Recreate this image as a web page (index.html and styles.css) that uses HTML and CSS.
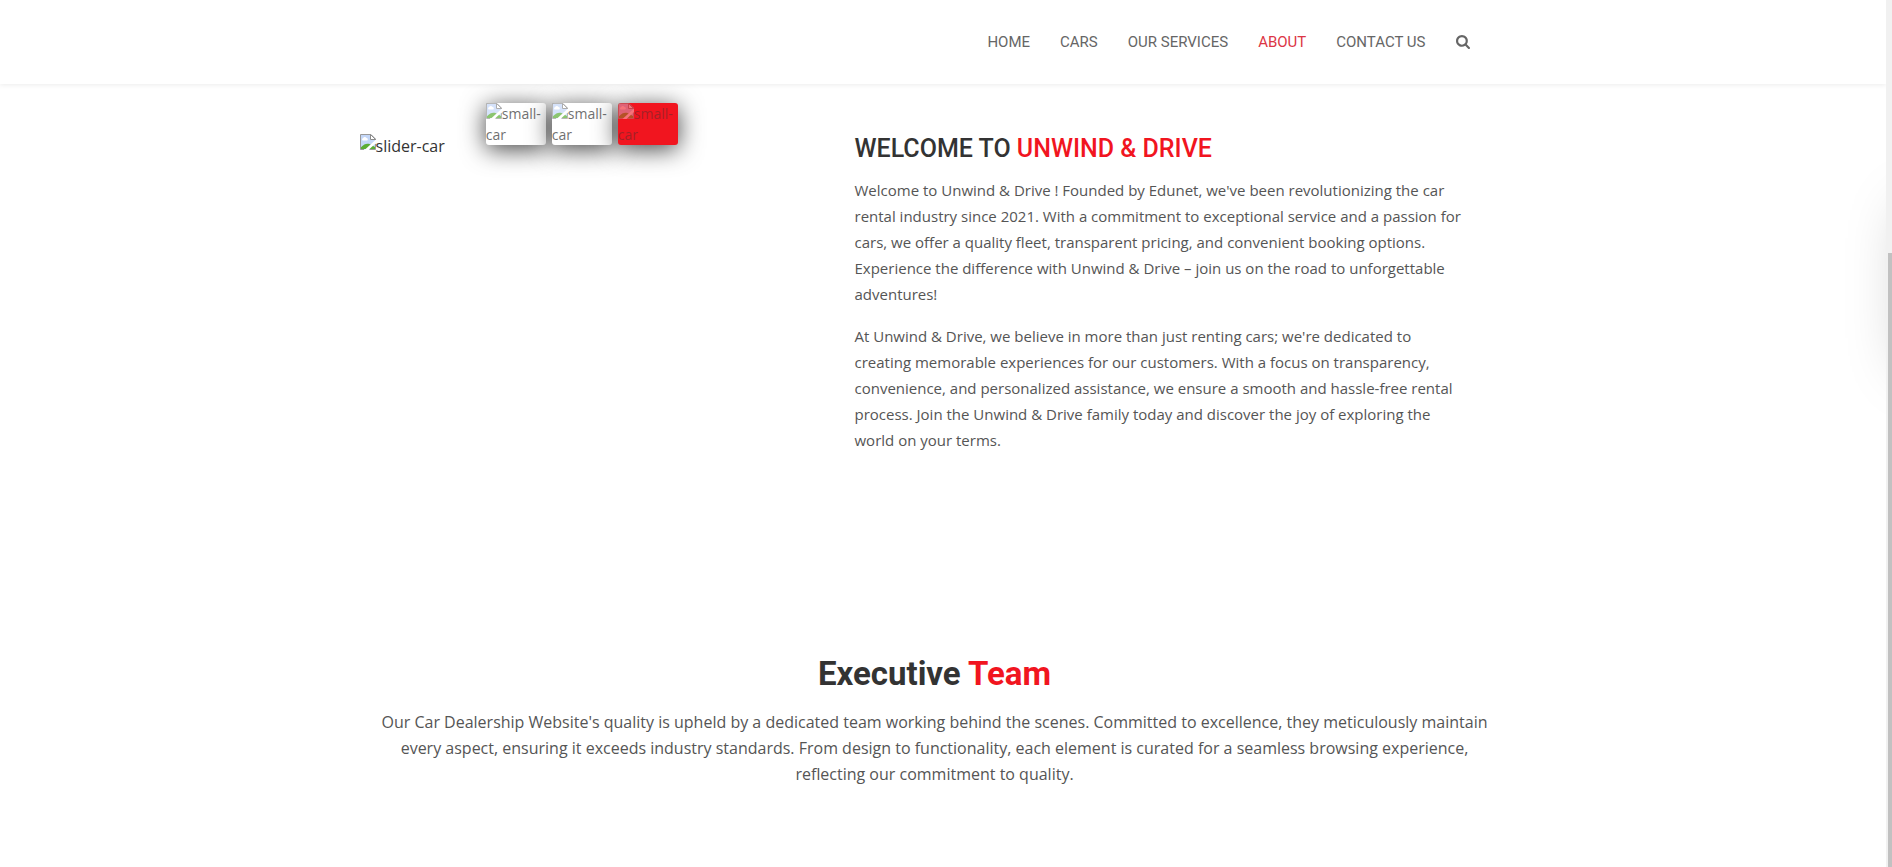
FILE: index.html
```
<!DOCTYPE html>
<html lang="en">
<head>
<meta charset="utf-8">
<meta name="viewport" content="width=device-width, initial-scale=1">
<title>Unwind &amp; Drive - About</title>
<link rel="stylesheet" href="styles.css">
</head>
<body>
<svg class="symbols" aria-hidden="true">
  <symbol id="missing-image" viewBox="0 0 16 16">
    <path d="M.5.5H11L15.500 5V15.500H.5Z" fill="#c4d7f8"/>
    <path d="M2.500 6.500a1.500 1.500 0 0 1 .6-2.500a2 2 0 0 1 3.400 0a1.400 1.400 0 0 1 .8 2.500Z" fill="#fff"/>
    <path d="M1 15V13.200C4 9.800 7 9.200 9.500 10L15 13v2Z" fill="#5bad35"/>
    <path d="M16 5.500V9L8.500 16H4.500Z" fill="#fff"/>
    <path d="M4 15.500H.5V.5H11L15.500 5V6M15.500 10v5.500H9.500" fill="none" stroke="#9a9a9a"/>
    <path d="M10.500.5V5.500H15.500Z" fill="#fff" stroke="#8b8b8b"/>
  </symbol>
</svg>
<div class="page">
  <header class="header">
    <nav class="nav wrap" aria-label="Main">
      <a href="#home">HOME</a>
      <a href="#cars">CARS</a>
      <a href="#services">OUR SERVICES</a>
      <a href="#about" class="active" aria-current="page">ABOUT</a>
      <a href="#contact">CONTACT US</a>
      <button class="search" type="button" aria-label="Search">
        <svg viewBox="0 0 1664 1664" aria-hidden="true"><path fill="currentColor" d="M1152 704q0-185-131.500-316.500T704 256 387.500 387.500 256 704t131.500 316.500T704 1152t316.500-131.500T1152 704zm512 832q0 52-38 90t-90 38q-54 0-90-38l-343-342q-179 124-399 124-143 0-273.500-55.500t-225-150-150-225T0 704t55.500-273.500 150-225 225-150T704 0t273.500 55.500 225 150 150 225T1408 704q0 220-124 399l343 343q37 37 37 90z"/></svg>
      </button>
    </nav>
  </header>
  <main>
    <section class="about wrap" id="about">
      <div class="slider">
        <div class="slide"><svg class="missing"><use href="#missing-image"/></svg>slider-car</div>
        <div class="thumbs">
          <button class="thumb" type="button"><span><svg class="missing"><use href="#missing-image"/></svg>small-car</span></button>
          <button class="thumb" type="button"><span><svg class="missing"><use href="#missing-image"/></svg>small-car</span></button>
          <button class="thumb selected" type="button"><span><svg class="missing"><use href="#missing-image"/></svg>small-car</span></button>
        </div>
      </div>
      <div class="intro">
        <h2>WELCOME TO <span class="accent">UNWIND &amp; DRIVE</span></h2>
        <p>Welcome to Unwind &amp; Drive ! Founded by Edunet, we've been revolutionizing the car rental industry since 2021. With a commitment to exceptional service and a passion for cars, we offer a quality fleet, transparent pricing, and convenient booking options. Experience the difference with Unwind &amp; Drive – join us on the road to unforgettable adventures!</p>
        <p>At Unwind &amp; Drive, we believe in more than just renting cars; we're dedicated to creating memorable experiences for our customers. With a focus on transparency, convenience, and personalized assistance, we ensure a smooth and hassle-free rental process. Join the Unwind &amp; Drive family today and discover the joy of exploring the world on your terms.</p>
      </div>
    </section>
    <section class="team wrap">
      <h2>Executive <span class="accent">Team</span></h2>
      <p>Our Car Dealership Website's quality is upheld by a dedicated team working behind the scenes. Committed to excellence, they meticulously maintain every aspect, ensuring it exceeds industry standards. From design to functionality, each element is curated for a seamless browsing experience, reflecting our commitment to quality.</p>
    </section>
  </main>
  <div class="drawer"></div>
</div>
<div class="scrollbar"><div class="scroll-thumb"></div></div>
</body>
</html>
```
FILE: styles.css
```
* { box-sizing: border-box; }
body {
  display: flex;
  min-height: 100vh;
  margin: 0;
  background: #fff;
  color: #333;
  font: 16px/24px "Open Sans", sans-serif;
}
.symbols { position: absolute; width: 0; height: 0; }
.page {
  position: relative;
  flex: 1;
  min-width: 0;
  overflow: hidden;
}
.header, main { padding: 0 17px 0 0; }
.wrap { max-width: 1150px; margin: 0 auto; }
.header {
  position: relative;
  background: #fff;
  box-shadow: 0 1px 5px rgba(0, 0, 0, .08);
}
.nav {
  display: flex;
  flex-wrap: wrap;
  align-items: center;
  justify-content: flex-end;
  gap: 0 30px;
  min-height: 84px;
  padding-right: 40px;
  font: 15px/24px Roboto, sans-serif;
}
.nav a { color: #666; text-decoration: none; }
.nav .active { color: #dc3545; }
.search {
  display: flex;
  padding: 0;
  border: 0;
  background: none;
  color: #666;
}
.search svg { width: 14px; height: 14px; }
.about {
  display: grid;
  grid-template-columns: minmax(0, 1fr) minmax(0, 615px);
  padding: 19px 40px 0 0;
}
.slider { display: flex; align-items: flex-start; gap: 41px; }
.slide { padding-top: 31px; }
.missing { width: 16px; height: 16px; vertical-align: -2px; }
.slide .missing { vertical-align: 2px; }
.thumbs { display: flex; gap: 6px; }
.thumb {
  width: 60px;
  height: 42px;
  padding: 0;
  border: 0;
  border-radius: 3px;
  background: #fff;
  box-shadow: 0 4px 24px rgba(0, 0, 0, .75);
  color: #333;
  font: 14px/21px "Open Sans", sans-serif;
  text-align: left;
}
.thumb .missing { vertical-align: bottom; margin-bottom: 5px; }
.thumb span { display: block; opacity: .7; }
.thumb.selected { background: #f1151f; }
.thumb.selected span { opacity: .4; }
.accent { color: #f1151f; }
.intro { padding-top: 31px; }
.intro h2 { margin: 0 0 13px; font: 500 25px/30px Roboto, sans-serif; }
p { margin: 0 0 16px; color: #555; line-height: 26px; }
.intro p { font-size: 15px; }
.team { padding: 185px 16px 64px; text-align: center; }
.team h2 { margin: 0 0 15px; font: 700 33px/40px Roboto, sans-serif; }
.drawer {
  position: absolute;
  top: 210px;
  left: calc(100% + 22px);
  width: 160px;
  height: 156px;
  box-shadow: 0 0 60px rgba(0, 0, 0, .25);
}
.scrollbar {
  width: 6px;
  padding: 253px 0 0 2px;
  display: flex;
  background: #f1f1f1;
}
.scroll-thumb { flex: 1; background: #c1c1c1; }
@media (max-width: 900px) {
  .about { grid-template-columns: 1fr; padding: 19px 16px 0; }
}
```
